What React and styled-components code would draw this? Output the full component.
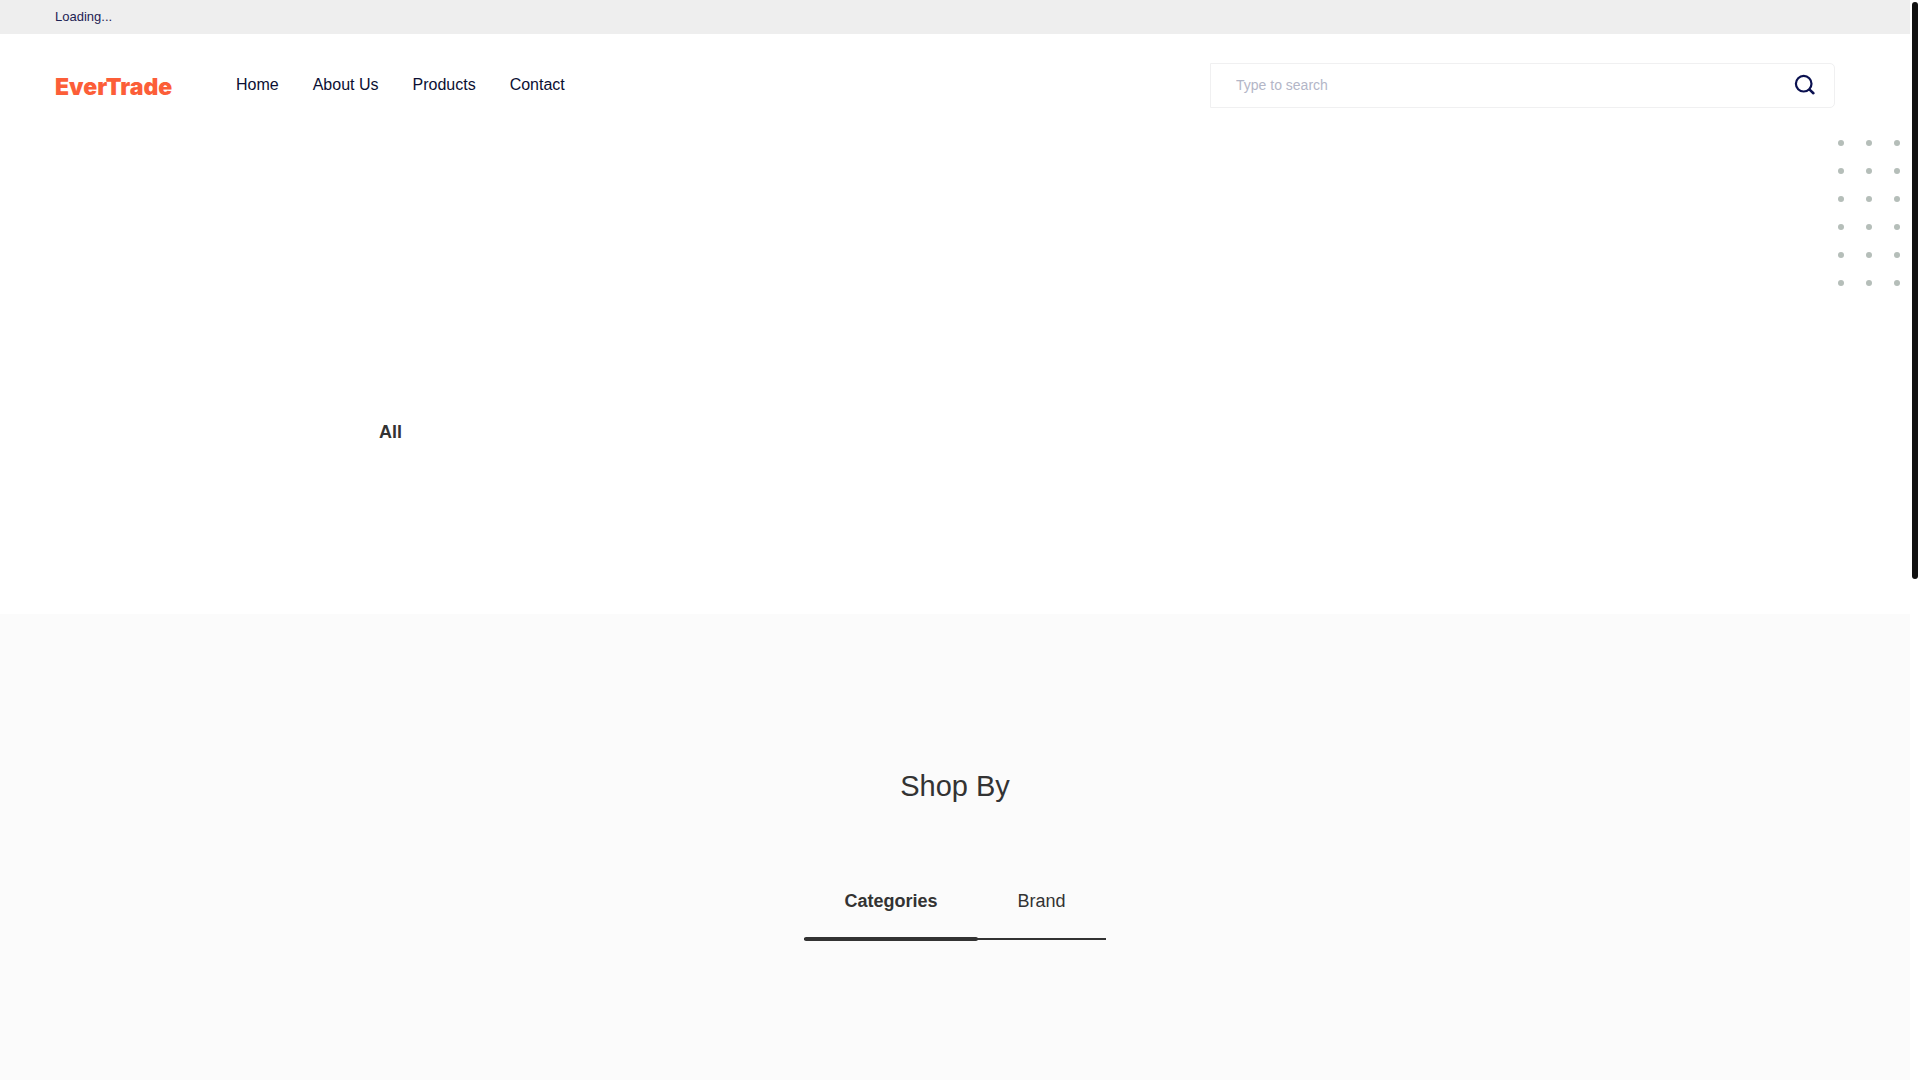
import React, { useState } from "react";
import styled, { createGlobalStyle } from "styled-components";

const GlobalStyle = createGlobalStyle`
  * {
    box-sizing: border-box;
  }
  body {
    margin: 0;
    background: #ffffff;
    font-family: "Liberation Sans", Arial, sans-serif;
    color: #333333;
  }
`;

const Page = styled.div`
  display: flex;
  flex-direction: column;
  min-height: 100vh;
  margin-right: 10px;
`;

const TopBar = styled.div`
  height: 34px;
  padding: 0 55px 2px;
  display: flex;
  align-items: center;
  background: #eeeeee;
  color: #1d2253;
  font-size: 13px;
`;

const Header = styled.header`
  height: 102px;
  padding: 0 75px 0 55px;
  display: flex;
  align-items: center;
`;

const Logo = styled.a`
  width: 181px;
  padding-top: 4px;
  font-family: Inter, sans-serif;
  font-size: 23px;
  line-height: 24px;
  font-weight: 900;
  color: #fc5e38;
  text-decoration: none;
`;

const Nav = styled.nav`
  display: flex;
  flex: 1;
  gap: 34px;
`;

const NavLink = styled.a`
  color: #0b0f33;
  font-size: 16px;
  line-height: 24px;
  text-decoration: none;
`;

const SearchForm = styled.form`
  width: 625px;
  max-width: 50%;
  height: 45px;
  display: flex;
  align-items: center;
  border: 1px solid #f0f0f1;
  border-radius: 0 5px 5px 0;
`;

const SearchInput = styled.input`
  flex: 1;
  height: 100%;
  padding: 0 25px;
  border: none;
  outline: none;
  background: transparent;
  font-family: inherit;
  font-size: 14px;
  color: #0b0f33;

  &::placeholder {
    color: #b3b6c7;
    opacity: 1;
  }
`;

const SearchButton = styled.button`
  height: 100%;
  padding: 0 18px;
  display: flex;
  align-items: center;
  border: none;
  background: transparent;
  cursor: pointer;
`;

const Hero = styled.section`
  position: relative;
  height: 478px;
  padding: 284px 379px 0;
`;

const FilterTitle = styled.h2`
  margin: 0;
  font-size: 18px;
  line-height: 24px;
`;

const Dots = styled.svg`
  position: absolute;
  top: 4px;
  right: 10px;
`;

const ShopSection = styled.section`
  flex: 1;
  display: flex;
  flex-direction: column;
  align-items: center;
  padding-top: 152px;
  background: #fbfbfb;
`;

const ShopTitle = styled.h2`
  margin: 0;
  font-size: 29px;
  line-height: 40px;
  font-weight: 400;
`;

const Tabs = styled.div`
  margin-top: 64px;
  display: flex;
`;

const Tab = styled.button`
  position: relative;
  height: 70px;
  padding: 0 40px 6px;
  border: none;
  border-bottom: 2px solid #333333;
  background: transparent;
  font-family: inherit;
  font-size: 18px;
  font-weight: ${(props) => (props.$active ? 700 : 400)};
  color: #333333;
  cursor: pointer;

  &::after {
    content: "";
    display: ${(props) => (props.$active ? "block" : "none")};
    position: absolute;
    left: 0;
    right: 0;
    bottom: -3px;
    height: 4px;
    border-radius: 2px;
    background: #333333;
  }
`;

const ScrollThumb = styled.div`
  position: fixed;
  top: 2px;
  right: 2px;
  width: 6px;
  height: 577px;
  border-radius: 3px;
  background: #111111;
`;

const links = ["Home", "About Us", "Products", "Contact"];
const tabs = ["Categories", "Brand"];
const dotCols = [0, 1, 2];
const dotRows = [0, 1, 2, 3, 4, 5];

function SearchIcon() {
  return (
    <svg width="22" height="22" viewBox="0 0 22 22" fill="none" stroke="#0b1150" strokeLinecap="round">
      <circle cx="9.7" cy="9.7" r="7.8" strokeWidth="2.2" />
      <path d="M15.6 15.6L19.4 19.2" strokeWidth="2.6" />
    </svg>
  );
}

function DotPattern() {
  return (
    <Dots width="62" height="146" fill="#b5beb9" aria-hidden="true">
      {dotRows.map((row) =>
        dotCols.map((col) => (
          <circle key={`${row}-${col}`} cx={3 + col * 28} cy={3 + row * 28} r="3" />
        ))
      )}
    </Dots>
  );
}

function App() {
  const [active, setActive] = useState("Categories");

  return (
    <>
      <GlobalStyle />
      <Page>
        <TopBar>Loading...</TopBar>
        <Header>
          <Logo href="#">EverTrade</Logo>
          <Nav>
            {links.map((link) => (
              <NavLink href="#" key={link}>
                {link}
              </NavLink>
            ))}
          </Nav>
          <SearchForm onSubmit={(e) => e.preventDefault()}>
            <SearchInput type="text" placeholder="Type to search" aria-label="Search" />
            <SearchButton type="submit" aria-label="Submit search">
              <SearchIcon />
            </SearchButton>
          </SearchForm>
        </Header>
        <Hero>
          <FilterTitle>All</FilterTitle>
          <DotPattern />
        </Hero>
        <ShopSection>
          <ShopTitle>Shop By</ShopTitle>
          <Tabs role="tablist">
            {tabs.map((tab) => (
              <Tab
                key={tab}
                role="tab"
                aria-selected={active === tab}
                $active={active === tab}
                onClick={() => setActive(tab)}
              >
                {tab}
              </Tab>
            ))}
          </Tabs>
        </ShopSection>
      </Page>
      <ScrollThumb />
    </>
  );
}

export default App;
